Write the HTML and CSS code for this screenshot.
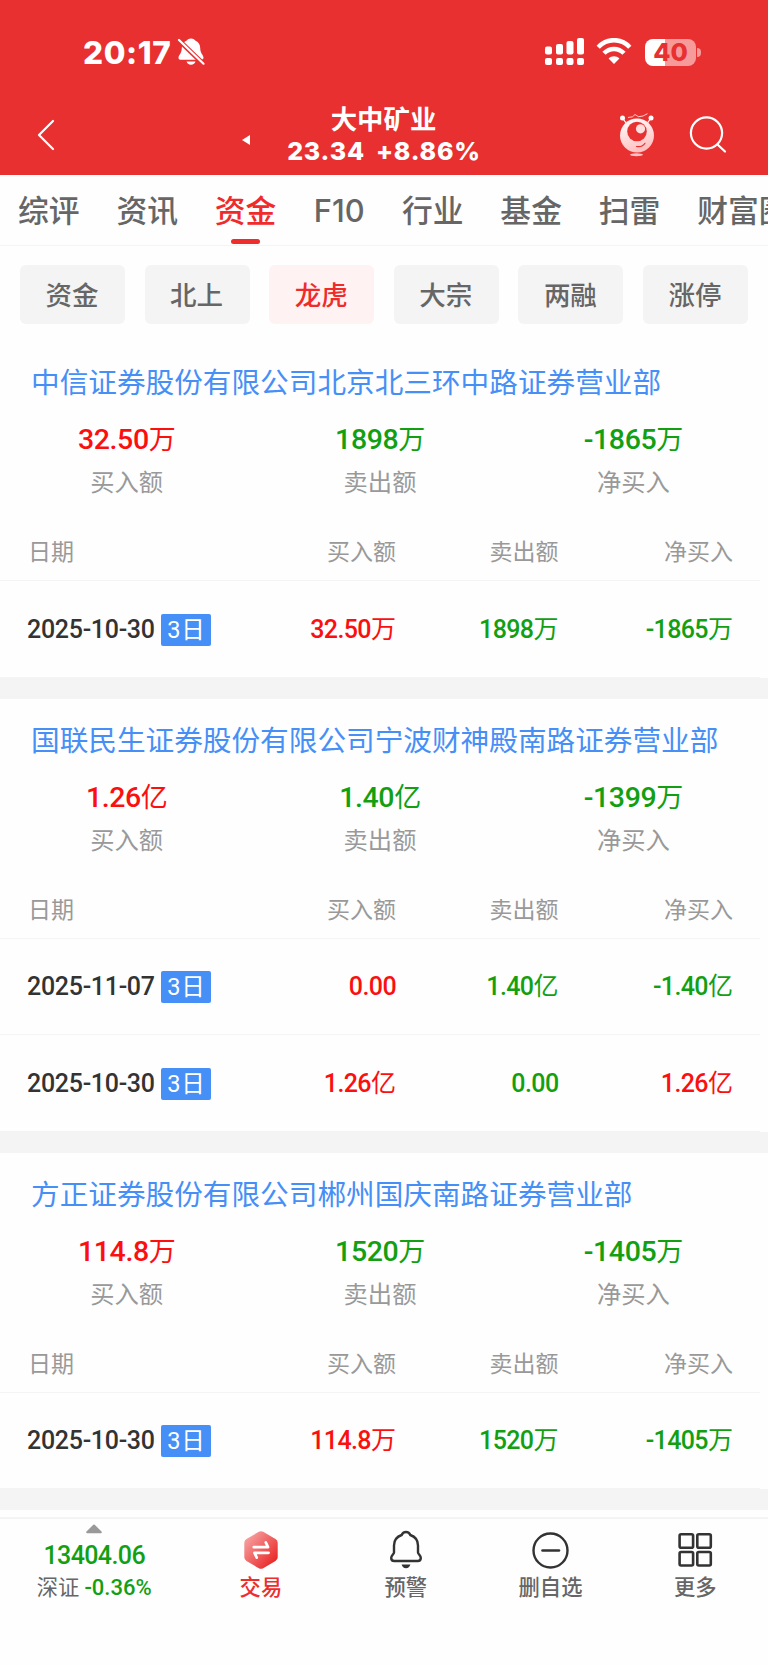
FILE: index.html
```html
<!DOCTYPE html>
<html lang="zh-CN">
<head>
    <meta charset="UTF-8">
    <meta name="viewport" content="width=device-width, initial-scale=1.0">
    <title>大中矿业 - 龙虎榜</title>
    <link rel="stylesheet" href="styles.css">
</head>
<body>

    <div class="app">
        <!-- 顶部 -->
        <header class="header">
            <div class="status-bar">
                <span class="status-time">20:17</span>
                <svg class="icon-mute" width="28" height="30" viewBox="0 0 28 30">
                    <path d="M14 1.500c1.900 0 3.400.8 4.200 1.900 3.300 1.300 5 4.200 5 7.600 0 5.500 3.300 7 3.300 9.600 0 1.500-.8 2.100-2.100 2.100H3.500C2.200 22.700 1.500 22 1.500 20.700c0-2.700 3.300-4.200 3.300-9.700 0-3.400 1.700-6.300 5-7.600C10.600 2.300 12.100 1.500 14 1.500z" fill="#fff"/>
                    <path d="M9.500 24.600h9c-.5 1.900-2.200 3.200-4.500 3.200s-4-1.300-4.500-3.200z" fill="#fff"/>
                    <path d="M1 2.500l26 25" stroke="#e83030" stroke-width="4.800"/>
                    <path d="M2 3l24.500 23.700" stroke="#fff" stroke-width="2.200" stroke-linecap="round"/>
                </svg>
                <div class="status-right">
                    <svg width="39" height="28" viewBox="0 0 39 28" fill="#fff">
                        <rect x="0" y="8.500" width="7" height="8" rx="2"/>
                        <rect x="11" y="6" width="7" height="10.500" rx="2"/>
                        <rect x="21.500" y="3" width="7" height="13.500" rx="2"/>
                        <rect x="32" y="0" width="7" height="16.500" rx="2"/>
                        <rect x="0" y="20" width="7" height="7" rx="2"/>
                        <rect x="11" y="20" width="7" height="7" rx="2"/>
                        <rect x="21.500" y="20" width="7" height="7" rx="2"/>
                        <rect x="32" y="20" width="7" height="7" rx="2"/>
                    </svg>
                    <svg class="icon-wifi" width="36" height="28" viewBox="0 0 36 28">
                        <path d="M2.200 9.200C11-.2 25-.2 33.800 9.200" fill="none" stroke="#fff" stroke-width="4.500"/>
                        <path d="M8 15.300c5.600-5.900 14.400-5.900 20 0" fill="none" stroke="#fff" stroke-width="4.500"/>
                        <path d="M18 26l-5.400-5.500c3-2.900 7.800-2.900 10.800 0z" fill="#fff"/>
                    </svg>
                    <div class="battery"><span>40</span></div>
                    <span class="battery-tip"></span>
                </div>
            </div>

            <div class="nav-bar">
                <svg class="icon-back" width="18" height="32" viewBox="0 0 18 32" fill="none" stroke="#fff" stroke-width="2.200" stroke-linecap="round" stroke-linejoin="round">
                    <path d="M16 2L2 16l14 14"/>
                </svg>
                <span class="prev-stock"></span>
                <div class="stock">
                    <h1>大中矿业</h1>
                    <p><span>23.34</span><span>+8.86%</span></p>
                </div>
                <svg class="icon-robot" width="36" height="44" viewBox="0 0 36 44">
                    <defs>
                        <linearGradient id="robotBody" x1="0" y1="0" x2="0.300" y2="1">
                            <stop offset="0" stop-color="#fff"/>
                            <stop offset="1" stop-color="#ffc2c2"/>
                        </linearGradient>
                    </defs>
                    <path d="M9 4.500l4.500-.7 2.500-2.300 3.500 2.200 4.500-.7 4.500-2.300" fill="none" stroke="#fff" stroke-width=".9" opacity=".85"/>
                    <path d="M3.500 5l3.500 5M32 5l-3.500 5" stroke="#fff" stroke-width="1.200"/>
                    <circle cx="3.500" cy="5" r="2.500" fill="#fff"/>
                    <circle cx="32" cy="5" r="2.500" fill="#fff"/>
                    <circle cx="18" cy="22.500" r="17" fill="url(#robotBody)"/>
                    <circle cx="18" cy="18.500" r="9.800" fill="#e83030"/>
                    <circle cx="21.500" cy="15.800" r="4.600" fill="#ffdede"/>
                    <path d="M17.500 33.500c4 .7 7-.7 8.500-3.200" fill="none" stroke="#e83030" stroke-width="1.200" stroke-linecap="round"/>
                    <ellipse cx="17.500" cy="41.700" rx="6.500" ry="1.500" fill="#ffc2c2"/>
                </svg>
                <svg class="icon-search" width="38" height="38" viewBox="0 0 38 38" fill="none" stroke="#fff" stroke-width="2.200" stroke-linecap="round">
                    <circle cx="17.500" cy="17" r="15.600"/>
                    <path d="M28.500 28.500l7.500 7"/>
                </svg>
            </div>
        </header>

        <!-- 主标签 -->
        <nav class="tabs">
            <a>综评</a>
            <a>资讯</a>
            <a class="active">资金</a>
            <a class="latin">F10</a>
            <a>行业</a>
            <a>基金</a>
            <a>扫雷</a>
            <a>财富圈</a>
        </nav>

        <!-- 二级标签 -->
        <div class="chips">
            <a>资金</a>
            <a>北上</a>
            <a class="active">龙虎</a>
            <a>大宗</a>
            <a>两融</a>
            <a>涨停</a>
        </div>

        <main class="content">
            <section class="dept">
                <h2>中信证券股份有限公司北京北三环中路证券营业部</h2>
                <div class="summary">
                    <div><b class="up">32.50<i>万</i></b><span>买入额</span></div>
                    <div><b class="down">1898<i>万</i></b><span>卖出额</span></div>
                    <div><b class="down">-1865<i>万</i></b><span>净买入</span></div>
                </div>
                <div class="row row-head"><span>日期</span><span>买入额</span><span>卖出额</span><span>净买入</span></div>
                <div class="row">
                    <span class="date">2025-10-30<em>3<i>日</i></em></span>
                    <span class="up">32.50<i>万</i></span>
                    <span class="down">1898<i>万</i></span>
                    <span class="down">-1865<i>万</i></span>
                </div>
            </section>

            <section class="dept">
                <h2>国联民生证券股份有限公司宁波财神殿南路证券营业部</h2>
                <div class="summary">
                    <div><b class="up">1.26<i>亿</i></b><span>买入额</span></div>
                    <div><b class="down">1.40<i>亿</i></b><span>卖出额</span></div>
                    <div><b class="down">-1399<i>万</i></b><span>净买入</span></div>
                </div>
                <div class="row row-head"><span>日期</span><span>买入额</span><span>卖出额</span><span>净买入</span></div>
                <div class="row">
                    <span class="date">2025-11-07<em>3<i>日</i></em></span>
                    <span class="up">0.00</span>
                    <span class="down">1.40<i>亿</i></span>
                    <span class="down">-1.40<i>亿</i></span>
                </div>
                <div class="row">
                    <span class="date">2025-10-30<em>3<i>日</i></em></span>
                    <span class="up">1.26<i>亿</i></span>
                    <span class="down">0.00</span>
                    <span class="up">1.26<i>亿</i></span>
                </div>
            </section>

            <section class="dept">
                <h2>方正证券股份有限公司郴州国庆南路证券营业部</h2>
                <div class="summary">
                    <div><b class="up">114.8<i>万</i></b><span>买入额</span></div>
                    <div><b class="down">1520<i>万</i></b><span>卖出额</span></div>
                    <div><b class="down">-1405<i>万</i></b><span>净买入</span></div>
                </div>
                <div class="row row-head"><span>日期</span><span>买入额</span><span>卖出额</span><span>净买入</span></div>
                <div class="row">
                    <span class="date">2025-10-30<em>3<i>日</i></em></span>
                    <span class="up">114.8<i>万</i></span>
                    <span class="down">1520<i>万</i></span>
                    <span class="down">-1405<i>万</i></span>
                </div>
            </section>
        </main>

        <!-- 底部工具栏 -->
        <footer class="toolbar">
            <div class="index">
                <svg width="18" height="10" viewBox="0 0 18 10"><path d="M9 1.500l6.800 6.800H2.200z" fill="#999" stroke="#999" stroke-width="2" stroke-linejoin="round"/></svg>
                <b class="down">13404.06</b>
                <p>深证<span class="down">-0.36%</span></p>
            </div>
            <a class="trade">
                <svg width="38" height="40" viewBox="0 0 38 40">
                    <defs>
                        <linearGradient id="tradeHex" x1="0" y1="0" x2="1" y2="1">
                            <stop offset=".15" stop-color="#f69a9a"/>
                            <stop offset=".85" stop-color="#ea2a2a"/>
                        </linearGradient>
                    </defs>
                    <path d="M16.800 1.800q2.200-1.300 4.400 0l12.300 7.100q2.200 1.300 2.200 3.800v14.600q0 2.500-2.200 3.800l-12.300 7.100q-2.200 1.300-4.400 0L4.500 31.100q-2.200-1.300-2.200-3.800V12.700q0-2.500 2.200-3.800z" fill="url(#tradeHex)"/>
                    <path d="M11.800 17.200h14.200l-2.200-4.700M26.500 22.800H12.500l2.200 4.700" fill="none" stroke="#fff" stroke-width="2.800" stroke-linecap="round" stroke-linejoin="round"/>
                </svg>
                <span>交易</span>
            </a>
            <a>
                <svg width="38" height="40" viewBox="0 0 38 40">
                    <path d="M19 2c-2.300 0-3.700 1.300-4.300 3C9.500 6.800 7 10.500 7 15.500v7c0 1.500-2.800 3-2.800 5.500 0 1.800 1.200 3 3 3h23.600c1.800 0 3-1.200 3-3 0-2.500-2.800-4-2.800-5.500v-7c0-5-2.500-8.700-7.700-10.500C22.700 3.300 21.300 2 19 2z" fill="none" stroke="#333" stroke-width="2.400" stroke-linejoin="round"/>
                    <path d="M14.600 34.500h8.800c-.6 2.300-2.200 3.700-4.400 3.700s-3.800-1.400-4.400-3.700z" fill="#333"/>
                </svg>
                <span>预警</span>
            </a>
            <a>
                <svg width="38" height="40" viewBox="0 0 38 40" fill="none" stroke="#333" stroke-width="2.400" stroke-linecap="round">
                    <circle cx="19.500" cy="20.500" r="17"/>
                    <path d="M11.500 20.500h16.500" stroke-width="2.600"/>
                </svg>
                <span>删自选</span>
            </a>
            <a>
                <svg width="38" height="40" viewBox="0 0 38 40" fill="none" stroke="#333" stroke-width="2.600">
                    <rect x="3.600" y="4.300" width="13.500" height="13.500" rx="1.500"/>
                    <rect x="21.300" y="4.300" width="13.500" height="13.500" rx="1.500"/>
                    <rect x="3.600" y="22" width="13.500" height="13.500" rx="1.500"/>
                    <rect x="21.300" y="22" width="13.500" height="13.500" rx="1.500"/>
                </svg>
                <span>更多</span>
            </a>
        </footer>
    </div>

</body>
</html>
```

FILE: styles.css
```css
* {
    box-sizing: border-box;
}

body, html {
    margin: 0;
    padding: 0;
    font-family: 'Inter', 'Noto Sans CJK SC', sans-serif;
    background-color: #fefefe;
    color: #333;
}

h1, h2, p {
    margin: 0;
}

i, em {
    font-style: normal;
}

svg {
    display: block;
    flex: none;
}

.app {
    width: 768px;
    height: 1665px;
    overflow: hidden;
    display: flex;
    flex-direction: column;
}

.up {
    color: #fb0f0f;
}

.down {
    color: #12a012;
}

/* 顶部 */
.header {
    height: 174.500px;
    flex: none;
    background-color: #e83030;
    color: #fff;
}

.status-bar {
    height: 104px;
    padding: 0 67px 0 83px;
    display: flex;
    align-items: center;
}

.status-time {
    width: 89px;
    padding-top: 2px;
    font-size: 31.500px;
    font-weight: 800;
    line-height: 36px;
    letter-spacing: 0.600px;
}

.icon-mute {
    margin-left: 5px;
}

.status-right {
    margin-left: auto;
    display: flex;
    align-items: center;
}

.icon-wifi {
    margin: 0 13px 0 12px;
}

.battery {
    width: 51px;
    height: 27px;
    border-radius: 8px;
    background: linear-gradient(to right, #fff 20.5px, #f79a9a 20.5px);
    color: #e83030;
    font-size: 25px;
    font-weight: 800;
    line-height: 27px;
    text-align: center;
}

.battery-tip {
    width: 4px;
    height: 9px;
    margin-left: 1px;
    border-radius: 0 4px 4px 0;
    background-color: #f79a9a;
}

.nav-bar {
    height: 70px;
    padding: 0 41px 0 37px;
    display: flex;
    align-items: flex-start;
}

.icon-back {
    margin-top: 15px;
}

.prev-stock {
    margin: 31px 0 0 187px;
    border: 5px solid transparent;
    border-left: 0;
    border-right: 8px solid #fff;
}

.stock {
    width: 268px;
    text-align: center;
}

.stock h1 {
    font-size: 26.4px;
    font-weight: 700;
    line-height: 31px;
    text-indent: -1px;
}

.stock p {
    display: flex;
    justify-content: center;
    gap: 11px;
    font-size: 25px;
    font-weight: 800;
    line-height: 33px;
    letter-spacing: 0.800px;
}

.icon-robot {
    margin: 9px 0 0 101px;
}

.icon-search {
    margin: 12px 0 0 auto;
}

/* 主标签 */
.tabs {
    height: 71.500px;
    flex: none;
    padding-left: 18px;
    display: flex;
    gap: 36.800px;
    overflow: hidden;
    border-bottom: 1px solid #f4f4f4;
}

.tabs a {
    flex: none;
    display: flex;
    flex-direction: column;
    align-items: center;
    font-size: 30.800px;
    font-weight: 500;
    line-height: 72px;
    color: #666;
}

.tabs .latin {
    width: 52px;
}

.tabs .active {
    color: #f02b2b;
}

.tabs .active::after {
    content: "";
    width: 29px;
    height: 5px;
    margin-top: -8px;
    border-radius: 3px;
    background-color: #ee2d2d;
}

/* 二级标签 */
.chips {
    flex: none;
    padding: 19px 20px 17px;
    display: flex;
    gap: 19.6px;
}

.chips a {
    height: 59px;
    flex: 1;
    border-radius: 6px;
    background-color: #f4f4f4;
    color: #666;
    font-size: 26.500px;
    font-weight: 500;
    line-height: 61px;
    text-align: center;
    text-indent: -1px;
}

.chips .active {
    background-color: #fff2f2;
    color: #f02b2b;
}

/* 营业部列表 */
.content {
    flex: none;
    height: 1176px;
    overflow: hidden;
}

.dept {
    padding-right: 8px;
    border-bottom: 21px solid #f4f4f4;
    font-family: 'Roboto', 'Noto Sans CJK SC', sans-serif;
}

.dept h2 {
    padding: 21px 0 0 31px;
    font-size: 28.650px;
    font-weight: 400;
    line-height: 42px;
    color: #468ff7;
    white-space: nowrap;
}

.summary {
    height: 122px;
    padding-top: 16px;
    display: flex;
}

.summary div {
    flex: 1;
    display: flex;
    flex-direction: column;
    align-items: center;
}

.summary b {
    font-size: 28.500px;
    font-weight: 500;
    line-height: 40px;
    letter-spacing: -0.400px;
}

.summary i {
    font-size: 27px;
    font-weight: 400;
}

.summary span {
    margin-top: 5px;
    font-size: 24.300px;
    line-height: 36px;
    color: #999;
}

.row {
    height: 96.500px;
    padding: 2px 0 0 27px;
    display: grid;
    grid-template-columns: 184px 185px 162.500px 174.500px;
    align-items: center;
    border-bottom: 1px solid #f4f4f4;
    font-size: 25px;
    font-weight: 500;
    line-height: 30px;
    letter-spacing: -0.600px;
    text-align: right;
}

.row i {
    font-weight: 400;
    letter-spacing: 0;
}

.row-head {
    height: 55px;
    padding-top: 0;
    font-size: 23px;
    font-weight: 400;
    letter-spacing: 0;
    color: #999;
}

.row-head span:first-child {
    padding-left: 1px;
    text-align: left;
}

.row .date {
    display: flex;
    align-items: center;
    justify-content: space-between;
    white-space: nowrap;
    letter-spacing: -0.300px;
    color: #333;
}

.date em {
    width: 50px;
    height: 32px;
    border-radius: 2px;
    background-color: #468ff7;
    color: #fff;
    font-size: 23.500px;
    font-weight: 400;
    line-height: 32px;
    letter-spacing: 1px;
    text-align: center;
}

/* 底部工具栏 */
.toolbar {
    flex: 1;
    border-top: 2px solid #f4f4f4;
    display: flex;
    color: #666;
}

.toolbar a {
    width: 144.800px;
    padding-top: 11px;
    display: flex;
    flex-direction: column;
    align-items: center;
    font-size: 21.300px;
    font-weight: 500;
    line-height: 35px;
}

.toolbar .trade {
    color: #ee2d2d;
}

.index {
    width: 188.500px;
    padding-top: 5px;
    display: flex;
    flex-direction: column;
    align-items: center;
    font-family: 'Roboto', 'Noto Sans CJK SC', sans-serif;
}

.index b {
    padding-top: 3px;
    font-size: 25px;
    font-weight: 500;
    line-height: 37px;
    letter-spacing: -0.600px;
}

.index p {
    display: flex;
    gap: 5px;
    font-size: 21.300px;
    line-height: 28px;
}

.index p span {
    font-size: 22px;
    font-weight: 500;
}
```
